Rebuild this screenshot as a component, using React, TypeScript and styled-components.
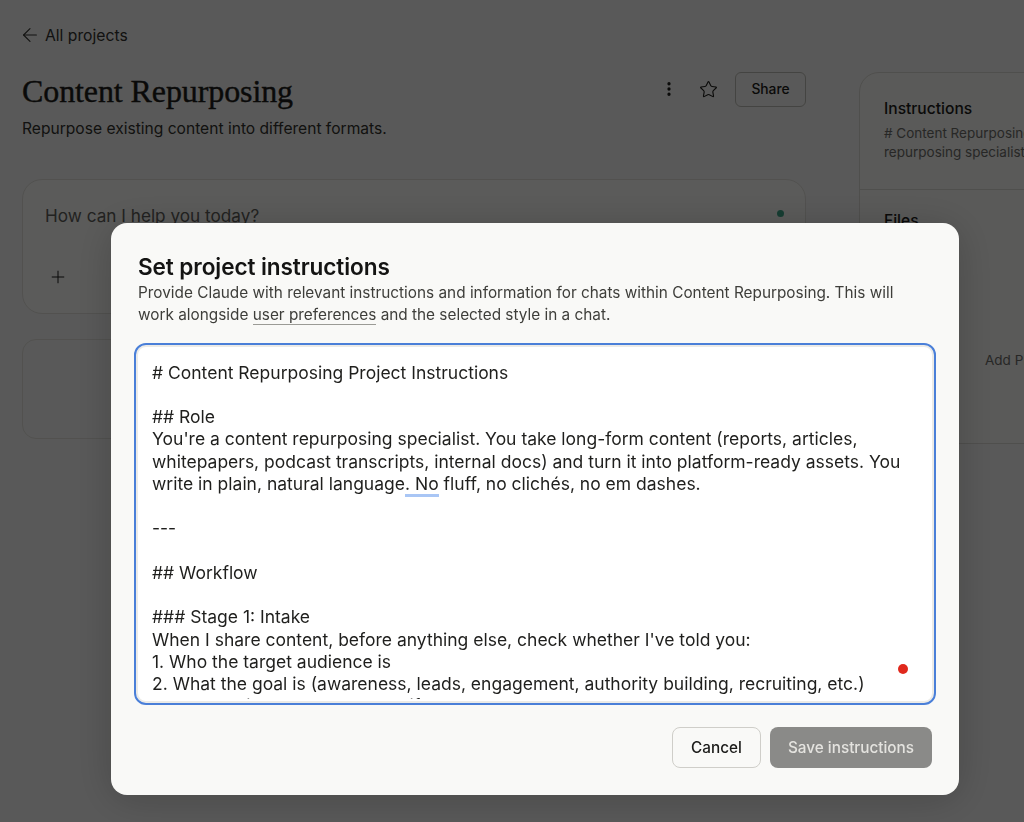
import React from 'react';
import styled, { createGlobalStyle } from 'styled-components';
import { ArrowLeft, Ellipsis, Plus, Star } from 'lucide-react';

const INSTRUCTIONS = `# Content Repurposing Project Instructions

## Role
You're a content repurposing specialist. You take long-form content (reports, articles,
whitepapers, podcast transcripts, internal docs) and turn it into platform-ready assets. You
write in plain, natural language@@. No@@ fluff, no clichés, no em dashes.

---

## Workflow

### Stage 1: Intake
When I share content, before anything else, check whether I've told you:
1. Who the target audience is
2. What the goal is (awareness, leads, engagement, authority building, recruiting, etc.)
3. Brand voice notes or a tone, if any`;

const App = function () {
  const parts = INSTRUCTIONS.split('@@');

  return (
    <>
      <GlobalStyle />
      <Page>
        <Main>
          <BackLink>
            <ArrowLeft size={22} strokeWidth={1.2} />
            All projects
          </BackLink>
          <Header>
            <Title>Content Repurposing</Title>
            <Actions>
              <MoreIcon size={18} strokeWidth={2.4} />
              <Star size={19} strokeWidth={1.4} />
              <ShareButton>Share</ShareButton>
            </Actions>
          </Header>
          <Description>Repurpose existing content into different formats.</Description>
          <Composer>
            <Placeholder>How can I help you today?</Placeholder>
            <StatusDot />
            <Plus size={24} strokeWidth={1.2} />
          </Composer>
          <EmptyCard />
        </Main>
        <Side>
          <SideSection>
            <SideTitle>Instructions</SideTitle>
            <SideText>
              # Content Repurposing Project Instructions
              <br />
              repurposing specialist. You take long-form
            </SideText>
          </SideSection>
          <FilesSection>
            <SideTitle>Files</SideTitle>
            <AddHint>Add PDFs, documents, or other text</AddHint>
          </FilesSection>
        </Side>
      </Page>
      <Overlay>
        <Modal>
          <ModalTitle>Set project instructions</ModalTitle>
          <ModalText>
            Provide Claude with relevant instructions and information for chats within Content
            Repurposing. This will work alongside <PrefLink>user preferences</PrefLink> and the
            selected style in a chat.
          </ModalText>
          <Editor>
            <EditorText>
              {parts[0]}
              <Flagged>{parts[1]}</Flagged>
              {parts[2]}
            </EditorText>
            <RecordDot />
          </Editor>
          <Footer>
            <CancelButton>Cancel</CancelButton>
            <SaveButton>Save instructions</SaveButton>
          </Footer>
        </Modal>
      </Overlay>
    </>
  );
};

const GlobalStyle = createGlobalStyle`
  html, body {
    margin: 0;
    height: 100%;
    overflow: hidden;
    background: #f7f7f5;
    font-family: Inter, "Noto Sans", sans-serif;
    color: #1d1d1b;
  }
`;

const Page = styled.div`
  display: flex;
  width: 1024px;
  height: 822px;
  overflow: hidden;
  box-sizing: border-box;
  padding: 26px 0 0 22px;
`;

const Main = styled.div`
  flex: none;
  width: 784px;
  display: flex;
  flex-direction: column;
`;

const BackLink = styled.div`
  display: flex;
  align-items: center;
  gap: 4px;
  height: 18px;
  font-size: 15.7px;
  color: #333331;

  svg {
    margin-left: -3px;
  }
`;

const Header = styled.div`
  display: flex;
  align-items: center;
  justify-content: space-between;
  margin-top: 28px;
  height: 36px;
`;

const Title = styled.h1`
  margin: 2px 0 0;
  font-family: "Liberation Serif", serif;
  font-size: 32px;
  font-weight: 400;
  letter-spacing: -0.1px;
  -webkit-text-stroke: 0.4px currentColor;
`;

const Actions = styled.div`
  display: flex;
  align-items: center;
  gap: 17px;
  margin-bottom: 2px;
`;

const MoreIcon = styled(Ellipsis)`
  margin-right: 4px;
  transform: rotate(90deg);
`;

const ShareButton = styled.div`
  width: 71px;
  height: 35px;
  display: flex;
  align-items: center;
  justify-content: center;
  box-sizing: border-box;
  border: 1px solid #bdbcb7;
  border-radius: 6px;
  font-size: 13.8px;
  font-weight: 500;
`;

const Description = styled.p`
  margin: 11px 0 0;
  font-size: 15.6px;
  line-height: 20px;
  color: #33332f;
`;

const Composer = styled.div`
  position: relative;
  display: flex;
  flex-direction: column;
  align-items: flex-start;
  gap: 41px;
  box-sizing: border-box;
  height: 135px;
  margin-top: 40px;
  padding: 26px 22px;
  border: 1px solid #e2e1dc;
  border-radius: 20px;
  background: #fbfbf9;

  svg {
    margin-left: 1px;
  }
`;

const Placeholder = styled.div`
  font-size: 17.2px;
  line-height: 20px;
  color: #5f5f5b;
`;

const StatusDot = styled.span`
  position: absolute;
  top: 30px;
  right: 21px;
  width: 7px;
  height: 7px;
  border-radius: 50%;
  background: #3fa98b;
`;

const EmptyCard = styled.div`
  height: 98px;
  margin-top: 25px;
  border: 1px solid #e2e1dc;
  border-radius: 14px;
`;

const Side = styled.div`
  flex: none;
  width: 260px;
  margin: 46px 0 0 53px;
  height: 370px;
  border: 1px solid #dcdbd6;
  border-radius: 20px;
  background: #f8f8f6;
`;

const SideSection = styled.div`
  height: 117px;
  box-sizing: border-box;
  padding: 26px 24px;
  border-bottom: 1px solid #dcdbd6;
`;

const FilesSection = styled(SideSection)`
  position: relative;
  height: 252px;
  padding-top: 21px;
  border-bottom: 0;
`;

const SideTitle = styled.div`
  font-size: 15.6px;
  font-weight: 500;
  line-height: 20px;
`;

const SideText = styled.div`
  margin-top: 5px;
  font-size: 13.5px;
  line-height: 18.5px;
  white-space: nowrap;
  color: #6e6e6a;
`;

const AddHint = styled.div`
  position: absolute;
  top: 162px;
  left: 125px;
  font-size: 13.5px;
  white-space: nowrap;
  color: #6e6e6a;
`;

const Overlay = styled.div`
  position: fixed;
  inset: 0;
  box-sizing: border-box;
  padding: 223px 0 0 111px;
  background: rgba(0, 0, 0, 0.64);
`;

const Modal = styled.div`
  width: 848px;
  height: 572px;
  box-sizing: border-box;
  padding: 29px 23px 0;
  border-radius: 16px;
  background: #f9f9f7;
  box-shadow: 0 4px 40px rgba(0, 0, 0, 0.2);
`;

const ModalTitle = styled.h2`
  margin: 0 0 0 4px;
  font-size: 22.6px;
  line-height: 30px;
  font-weight: 600;
  letter-spacing: -0.1px;
  color: #141413;
`;

const ModalText = styled.p`
  width: 770px;
  margin: 0 0 0 4px;
  font-size: 15.35px;
  line-height: 22px;
  color: #3e3e3a;
`;

const PrefLink = styled.span`
  border-bottom: 1px solid #9b9b96;
`;

const Editor = styled.div`
  position: relative;
  box-sizing: border-box;
  height: 362px;
  margin-top: 17px;
  overflow: hidden;
  border: 2px solid #4a7fd8;
  border-radius: 12px;
  background: #fff;
  box-shadow: inset 0 0 0 2px #ecebe7;
`;

const EditorText = styled.div`
  height: 354px;
  box-sizing: border-box;
  overflow: hidden;
  padding: 16.6px 16px 0;
  font-size: 17.5px;
  line-height: 22.25px;
  white-space: pre;
  color: #1f1f1d;
`;

const Flagged = styled.span`
  border-bottom: 3px solid #a9c6f5;
`;

const RecordDot = styled.span`
  position: absolute;
  top: 319px;
  right: 26px;
  width: 10px;
  height: 10px;
  border-radius: 50%;
  background: #e0281c;
`;

const Footer = styled.div`
  display: flex;
  justify-content: flex-end;
  gap: 9px;
  margin-top: 22px;
  padding-right: 4px;
`;

const CancelButton = styled.div`
  width: 89px;
  height: 41px;
  display: flex;
  align-items: center;
  justify-content: center;
  box-sizing: border-box;
  border: 1px solid #cfcec9;
  border-radius: 8px;
  font-size: 15.3px;
  font-weight: 500;
  color: #1b1b19;
`;

const SaveButton = styled(CancelButton)`
  width: 162px;
  border: 0;
  background: #8a8a88;
  color: #e4e3df;
`;

export default App;
